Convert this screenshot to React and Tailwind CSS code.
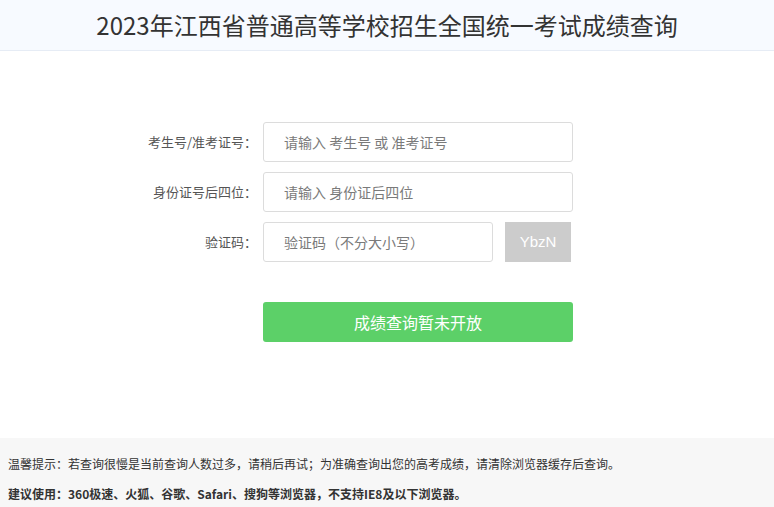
export default function App() {
  const font = { fontFamily: '"Microsoft YaHei", "Noto Sans CJK SC", sans-serif' };
  const rows = [
    { label: "考生号/准考证号：", placeholder: "请输入 考生号 或 准考证号" },
    { label: "身份证号后四位：", placeholder: "请输入 身份证后四位" },
  ];

  return (
    <div className="flex h-[507px] flex-col overflow-hidden bg-white text-[#333]" style={font}>
      <header className="flex h-[51px] shrink-0 items-center justify-center border-b border-[#e6ecf5] bg-[#f7faff]">
        <h1 className="text-[24px] leading-none text-[#333]">
          2023年江西省普通高等学校招生全国统一考试成绩查询
        </h1>
      </header>

      <main className="flex h-[387px] shrink-0 flex-col gap-[10px] pl-[137px] pt-[71px]">
        {rows.map((r) => (
          <div key={r.label} className="flex items-center">
            <label className="w-[120px] text-right text-[13px] text-[#555]">{r.label}</label>
            <input
              className="ml-[6px] h-[40px] w-[310px] rounded-[3px] border border-[#dcdcdc] bg-white pl-[20px] text-[14px] outline-none placeholder:text-[#7a7a7a]"
              placeholder={r.placeholder}
            />
          </div>
        ))}
        <div className="flex items-center">
          <label className="w-[120px] text-right text-[13px] text-[#555]">验证码：</label>
          <input
            className="ml-[6px] h-[40px] w-[230px] rounded-[3px] border border-[#dcdcdc] bg-white pl-[20px] text-[14px] outline-none placeholder:text-[#7a7a7a]"
            placeholder="验证码（不分大小写）"
          />
          <div
            className="ml-[12px] flex h-[40px] w-[66px] items-center justify-center bg-[#cccccc] text-[15px] text-white"
            style={{ fontFamily: '"Liberation Sans", Arial, sans-serif' }}
          >
            YbzN
          </div>
        </div>
        <button className="ml-[126px] mt-[30px] h-[40px] w-[310px] rounded-[3px] bg-[#5cd068] text-[16px] text-white">
          成绩查询暂未开放
        </button>
      </main>

      <footer className="h-[69px] shrink-0 overflow-hidden bg-[#f7f7f7] pl-[8px] pt-[11px] text-[12px] leading-[30px] text-[#333]">
        <p>温馨提示：若查询很慢是当前查询人数过多，请稍后再试；为准确查询出您的高考成绩，请清除浏览器缓存后查询。</p>
        <p className="font-bold">建议使用：360极速、火狐、谷歌、Safari、搜狗等浏览器，不支持IE8及以下浏览器。</p>
      </footer>
    </div>
  );
}
